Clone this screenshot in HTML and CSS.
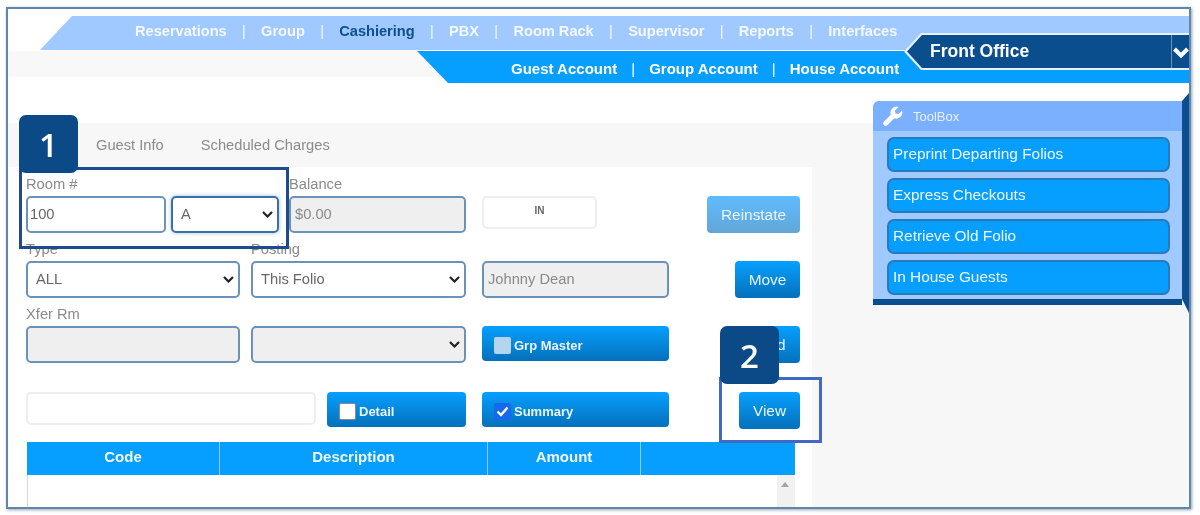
FILE: index.html
```html
<!DOCTYPE html>
<html lang="en">
<head>
<meta charset="utf-8">
<title>Front Office - Cashiering</title>
<link rel="stylesheet" href="styles.css">
</head>
<body>
<div class="frame">
  <header class="header">
    <nav class="nav-primary">
      <a>Reservations</a><i>|</i><a>Group</a><i>|</i><a class="current">Cashiering</a><i>|</i><a>PBX</a><i>|</i><a>Room Rack</a><i>|</i><a>Supervisor</a><i>|</i><a>Reports</a><i>|</i><a>Interfaces</a>
    </nav>
    <div class="sub-strip">
      <nav class="nav-secondary">
        <a>Guest Account</a><i>|</i><a>Group Account</a><i>|</i><a>House Account</a>
      </nav>
    </div>
    <div class="office">
      <div class="office-inner">
        <span class="office-name">Front Office</span>
        <span class="office-toggle">
          <svg width="18" height="12" viewBox="0 0 18 12"><path d="M1.5 3 L8 9.5 L14.5 3" fill="none" stroke="#fff" stroke-width="4"/></svg>
        </span>
      </div>
    </div>
  </header>

  <main class="main">
    <section class="content">
      <div class="tabs">
        <span class="tab">Guest Info</span>
        <span class="tab">Scheduled Charges</span>
      </div>
      <div class="panel">
        <div class="row">
          <div class="field">
            <label class="lbl">Room #</label>
            <div class="pair">
              <input class="ctl w140" value="100">
              <select class="ctl w108 focus"><option>A</option></select>
            </div>
          </div>
          <div class="field ml10">
            <label class="lbl">Balance</label>
            <input class="ctl off w177" value="$0.00" readonly>
          </div>
          <div class="status nolabel">IN</div>
          <button class="btn faded reinstate nolabel">Reinstate</button>
        </div>

        <div class="row gap8">
          <div class="field">
            <label class="lbl">Type</label>
            <select class="ctl w214"><option>ALL</option></select>
          </div>
          <div class="field ml11">
            <label class="lbl">Posting</label>
            <select class="ctl w215"><option>This Folio</option></select>
          </div>
          <input class="ctl off w187 ml16 nolabel" value="Johnny Dean" readonly>
          <button class="btn push w65 nolabel">Move</button>
        </div>

        <div class="row gap8">
          <div class="field">
            <label class="lbl">Xfer Rm</label>
            <input class="ctl off w214" readonly>
          </div>
          <select class="ctl off w215 ml11 nolabel"><option></option></select>
          <button class="btn check w187 ml16 nolabel"><span class="box muted"></span>Grp Master</button>
          <button class="btn push w65 nolabel">Send</button>
        </div>

        <div class="row gap29">
          <input class="search">
          <button class="btn check w139 ml11"><span class="box blank"></span>Detail</button>
          <button class="btn check w187 ml16"><span class="box checked"><svg width="13" height="11" viewBox="0 0 13 11"><path d="M1.5 5.5 L5 9 L11.5 1.5" fill="none" stroke="#fff" stroke-width="2.4"/></svg></span>Summary</button>
          <button class="btn push w61">View</button>
        </div>

        <div class="table">
          <div class="thead">
            <span>Code</span><span>Description</span><span>Amount</span><span></span>
          </div>
          <div class="tbody">
            <div class="scroll"><b class="arrow"></b></div>
          </div>
        </div>
      </div>
    </section>

    <aside class="toolbox">
      <div class="tool-card">
        <div class="tool-head">
          <svg width="20" height="20" viewBox="0 0 20 20"><path d="M19 4.5 L15.5 8 L12.5 7.5 L12 4.5 L15.5 1 A6 6 0 0 0 7.8 8.7 L1 15.5 A2.4 2.4 0 0 0 4.5 19 L11.3 12.2 A6 6 0 0 0 19 4.5Z" fill="#fff"/></svg>
          <span>ToolBox</span>
        </div>
        <div class="tool-list">
          <a class="tool">Preprint Departing Folios</a>
          <a class="tool">Express Checkouts</a>
          <a class="tool">Retrieve Old Folio</a>
          <a class="tool">In House Guests</a>
        </div>
      </div>
      <div class="tool-edge"></div>
    </aside>
  </main>

  <div class="note-box box-one"></div>
  <div class="note-badge badge-one">1</div>
  <div class="note-box box-two"></div>
  <div class="note-badge badge-two">2</div>
</div>
</body>
</html>
```

FILE: styles.css
```css
* { box-sizing: border-box; }
html, body { margin: 0; height: 100%; background: #fff; overflow: hidden; }
body { font-family: "Liberation Sans", Arial, sans-serif; font-size: 15px; color: #777; }

.frame {
  position: relative;
  margin: 7px 0 0 6px;
  width: 1185px;
  height: 502px;
  border: 2px solid #5f87ad;
  box-shadow: 1px 1px 3px rgba(70, 90, 110, .55);
  overflow: hidden;
  background: #fff;
  filter: blur(.5px);
}

.header { position: relative; height: 75px; padding-top: 7px; }
.nav-primary, .nav-secondary { display: flex; align-items: center; font-weight: bold; color: #fff; }
.nav-primary {
  height: 34px;
  padding: 0 0 5px 127px;
  background: #a0c9ff;
  clip-path: polygon(64px 0, 100% 0, 100% 100%, 32px 100%);
  color: #f4f8ff;
  font-size: 14.6px;
}
.nav-primary i, .nav-secondary i { font-style: normal; font-weight: normal; width: 34.4px; text-align: center; }
.nav-primary a { white-space: nowrap; }
.nav-primary .current { color: #0e4f8f; }

.sub-strip {
  height: 34px;
  margin-top: 1px;
  background: linear-gradient(#f8f8f8 26px, #fff 26px);
}
.nav-secondary {
  height: 32px;
  padding: 3px 0 0 94px;
  margin-left: 409px;
  background: #069fff;
  clip-path: polygon(0 0, 100% 0, 100% 100%, 31px 100%);
  font-size: 15px;
}
.nav-secondary i { width: 32px; }

.office {
  position: absolute;
  left: 896px;
  top: 24px;
  width: 290px;
  height: 37px;
  background: #e8f2ff;
  clip-path: polygon(0 50%, 17px 0, 100% 0, 100% 100%, 17px 100%);
  padding: 2px 0;
}
.office-inner {
  display: flex;
  align-items: center;
  height: 100%;
  margin-left: 3px;
  background: #0a4e8d;
  clip-path: polygon(0 50%, 15px 0, 100% 0, 100% 100%, 15px 100%);
  padding-left: 23px;
  color: #fff;
  font-weight: bold;
  font-size: 17.5px;
}
.office-name { width: 241px; }
.office-toggle {
  display: flex;
  align-items: center;
  height: 100%;
  padding-left: 1px;
  border-left: 1px solid #6f93b8;
}

.main {
  display: flex;
  align-items: flex-start;
  height: 423px;
  background: linear-gradient(#fff 39px, #f7f7f7 39px);
}
.content { width: 804px; flex: none; margin-top: 39px; }
.tabs { display: flex; height: 44px; padding: 14px 0 0 88px; gap: 37px; color: #8b8b8b; font-size: 14.7px; }
.panel { height: 340px; padding: 9px 12px 0 18px; background: #fff; }

.row { display: flex; align-items: flex-start; }
.gap8 { margin-top: 8px; }
.gap29 { margin-top: 29px; }
.field { display: flex; flex-direction: column; }
.pair { display: flex; gap: 5px; }
.lbl { height: 20px; line-height: 16px; color: #8a8a8a; font-size: 14.7px; }
.nolabel { margin-top: 20px; }
.ml10 { margin-left: 10px; }
.ml11 { margin-left: 11px; }
.ml16 { margin-left: 16px; }

.ctl {
  height: 37px;
  padding: 0 8px 2px;
  border: 2px solid #6c92b8;
  border-radius: 5px;
  background: #fff;
  color: #666;
  font: 14.7px "Liberation Sans", Arial, sans-serif;
  outline: none;
}
select.ctl {
  appearance: none;
  background-image: url("data:image/svg+xml,%3Csvg xmlns='http://www.w3.org/2000/svg' width='11' height='7' viewBox='0 0 11 7'%3E%3Cpath d='M1 1 L5.5 5.5 L10 1' fill='none' stroke='%23222' stroke-width='2.2'/%3E%3C/svg%3E");
  background-repeat: no-repeat;
  background-position: right 4px center;
}
.ctl.w140 { padding-left: 2px; }
.focus { box-shadow: 0 0 4px rgba(110, 170, 230, .7); border-color: #3d6fa3; }
.off { background-color: #efefef; color: #8a8a8a; padding-left: 4px; }
select.off { padding-left: 8px; }
.w108 { width: 108px; }
.w140 { width: 140px; }
.w177 { width: 177px; }
.w187 { width: 187px; }
.w214 { width: 214px; }
.w215 { width: 215px; }
.w139 { width: 139px; }
.w65 { width: 65px; }
.w61 { width: 61px; }

.status {
  width: 115px;
  height: 33px;
  margin-left: 16px;
  padding-top: 7px;
  border: 2px solid #eeeeee;
  border-radius: 5px;
  text-align: center;
  font-size: 10px;
  font-weight: bold;
  color: #666;
}

.btn {
  height: 37px;
  border: 0;
  border-radius: 4px;
  background: linear-gradient(#06a0ff, #0570ba);
  color: #eaf5ff;
  font: 15.4px "Liberation Sans", Arial, sans-serif;
  padding: 0;
}
.push { margin-left: auto; }
.reinstate { width: 93px; margin-left: auto; }
.faded { background: linear-gradient(#5fbcff, #62a6d6); }
.check {
  display: flex;
  align-items: center;
  gap: 3px;
  height: 35px;
  padding: 3px 0 0 12px;
  font-size: 13px;
  font-weight: bold;
}
.box { display: flex; align-items: center; justify-content: center; width: 17px; height: 17px; border-radius: 2px; }
.muted { background: #b5d5ee; }
.blank { background: #fff; border: 1px solid #8a8a8a; }
.checked { background: #1669ef; }

.search {
  width: 290px;
  height: 33px;
  border: 2px solid #eeeeee;
  border-radius: 5px;
  outline: none;
}

.table { margin: 13px 5px 0 1px; }
.thead {
  display: grid;
  grid-template-columns: 192px 268px 153px 155px;
  height: 33px;
  background: #069fff;
  color: #f2f9ff;
  font-weight: bold;
  font-size: 15px;
  line-height: 30px;
  text-align: center;
}
.thead span + span { border-left: 1px solid #8cccf5; }
.tbody { display: flex; justify-content: flex-end; height: 40px; border-left: 1px solid #d8d8d8; background: #fff; }
.scroll { width: 18px; height: 40px; background: #f1f1f1; padding: 7px 0 0 4px; }
.arrow { display: block; width: 0; height: 0; border: 4px solid transparent; border-top: 0; border-bottom: 5px solid #a3a3a3; }

.toolbox { display: flex; align-items: stretch; width: 316px; margin: 17px 0 0 61px; flex: none; }
.tool-card { width: 310px; height: 204px; background: #a0c9ff; border-bottom: 6px solid #0b4e8d; border-radius: 6px 0 0 0; }
.tool-head {
  display: flex;
  align-items: center;
  gap: 10px;
  height: 30px;
  padding-left: 10px;
  background: #7ab0ff;
  border-radius: 6px 0 0 0;
  color: #e6f1ff;
  font-size: 13px;
}
.tool-list { display: flex; flex-direction: column; gap: 6px; padding: 6px 12px 0 14px; }
.tool {
  display: block;
  height: 35px;
  padding-left: 4px;
  background: #069fff;
  border: 2px solid #2a79bd;
  border-radius: 7px;
  color: #f0f8ff;
  line-height: 29px;
  font-size: 15.4px;
}
.tool-edge {
  width: 7px;
  height: 220px;
  margin-top: -8px;
  background: #0b4e8d;
  clip-path: polygon(0 8px, 100% 0, 100% 100%, 0 206px);
}

.note-box { position: absolute; }
.box-one { left: 11px; top: 158px; width: 270px; height: 82px; border: 3px solid #1f4a8c; }
.box-two { left: 711px; top: 368px; width: 103px; height: 66px; border: 3px solid #4268c4; }
.note-badge {
  position: absolute;
  width: 59px;
  height: 58px;
  display: flex;
  align-items: center;
  justify-content: center;
  background: #0b4a87;
  border-radius: 7px;
  color: #fff;
  font: 600 33px "Open Sans", "Noto Sans", sans-serif;
}
.badge-one { left: 11px; top: 106px; }
.badge-two { left: 712px; top: 317px; }
```
